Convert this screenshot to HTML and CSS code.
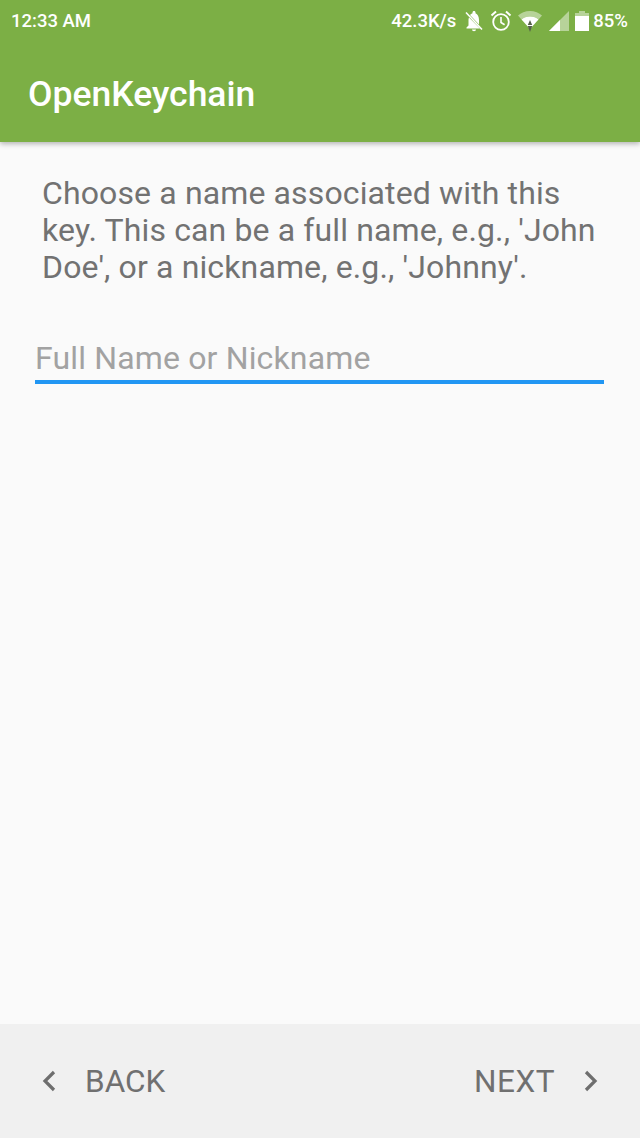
FILE: index.html
```html
<!DOCTYPE html>
<html lang="en">
<head>
<meta charset="utf-8">
<title>OpenKeychain</title>
<link rel="stylesheet" href="styles.css">
</head>
<body>
<div class="app">
  <header class="appbar">
    <div class="status">
      <span class="time">12:33 AM</span>
      <div class="status-right">
        <span class="speed">42.3K/s</span>
        <svg class="ic-bell" width="20" height="22" viewBox="0 0 20 22"><path fill="#fff" d="M10 1c-1 0-1.500.7-1.500 1.500v.8c-1 .3-1.900.9-2.500 1.700l9 9.500V10c0-3-1.300-5.700-3.500-6.700v-.8C11.500 1.700 11 1 10 1zM5 7.500C4.700 8.300 4.500 9.100 4.500 10v5.500L2.500 17.500v1h13.500L5 7.500zM8 19.500c0 1 .9 1.700 2 1.700s2-.7 2-1.700z"/><path stroke="#fff" stroke-width="1.600" d="M2 2.500l16 17"/></svg>
        <svg class="ic-alarm" width="22" height="22" viewBox="0 0 22 22"><circle cx="11" cy="12" r="7.800" fill="none" stroke="#fff" stroke-width="1.800"/><path fill="none" stroke="#fff" stroke-width="1.600" d="M11 7V12.500l3.600 2.200"/><path fill="none" stroke="#fff" stroke-width="2" d="M1.500 5.500l4.500-4M20.500 5.500l-4.500-4"/></svg>
        <svg class="ic-wifi" width="26" height="24" viewBox="0 0 26 24"><path fill="#fff" fill-opacity=".45" d="M1 6.500C4 3.800 8.200 2 13 2s9 1.800 12 4.500l-3.500 4C19.500 8.500 16.500 7.500 13 7.500s-6.500 1-8.500 3z"/><path fill="#fff" d="M4.500 10.500C6.500 8.500 9.500 7.500 13 7.500s6.500 1 8.500 3L13 20z"/><path fill="#55604a" d="M13 11l2.200 5h-4.400zM10.800 17h4.400L13 23z"/></svg>
        <svg class="ic-signal" width="20" height="20" viewBox="0 0 20 20"><path fill="#fff" fill-opacity=".45" d="M20 0v20H0z"/><path fill="#fff" d="M11 9v11H0z"/></svg>
        <svg class="ic-battery" width="14" height="22" viewBox="0 0 14 22"><path fill="#fff" fill-opacity=".45" d="M4 1h6v2h4v4H0V3h4z"/><path fill="#fff" d="M0 6h14v15H0z"/></svg>
        <span class="pct">85%</span>
      </div>
    </div>
    <h1 class="title">OpenKeychain</h1>
  </header>
  <main class="content">
    <p class="intro">Choose a name associated with this key. This can be a full name, e.g., 'John Doe', or a nickname, e.g., 'Johnny'.</p>
    <div class="field">Full Name or Nickname</div>
  </main>
  <footer class="nav">
    <div class="nav-btn">
      <svg width="14" height="24" viewBox="0 0 14 24"><path fill="none" stroke="#6e6e6e" stroke-width="3.200" d="M12 3L3 12l9 9"/></svg>
      <span class="back-label">BACK</span>
    </div>
    <div class="nav-btn">
      <span class="next-label">NEXT</span>
      <svg width="14" height="24" viewBox="0 0 14 24"><path fill="none" stroke="#6e6e6e" stroke-width="3.200" d="M2 3l9 9-9 9"/></svg>
    </div>
  </footer>
</div>
</body>
</html>
```
FILE: styles.css
```css
* { box-sizing: border-box; }
html, body { margin: 0; padding: 0; }
body { font-family: Roboto, "Liberation Sans", sans-serif; background: #fafafa; }
.app { width: 640px; height: 1138px; display: flex; flex-direction: column; overflow: hidden; }
.appbar { height: 142px; background: #7caf45; color: #fff; box-shadow: 0 2px 5px rgba(0,0,0,.28); position: relative; z-index: 1; flex: none; }
.status { height: 42px; padding: 0 12px 0 11px; display: flex; align-items: center; justify-content: space-between; font-weight: 500; font-size: 18.5px; }
.status-right { display: flex; align-items: center; }
.speed { margin-right: 8px; }
.ic-bell { margin-right: 6px; }
.ic-alarm { margin-right: 5px; }
.ic-wifi { margin-right: 6px; }
.ic-signal { margin-right: 6px; }
.ic-battery { margin-right: 4px; }
.title { margin: 0; padding: 30px 0 0 28px; font-size: 35.5px; line-height: 44px; font-weight: 500; }
.content { flex: 1; padding: 33px 35px 0; }
.intro { margin: 0 0 0 7px; color: #727272; font-size: 32px; line-height: 37px; letter-spacing: .13px; width: 560px; }
.field { margin-top: 54px; width: 569px; height: 44px; border-bottom: 4px solid #2196f3; color: #a2a2a2; font-size: 32px; line-height: 37px; letter-spacing: .15px; }
.nav { height: 114px; flex: none; background: #f0f0f0; display: flex; align-items: center; justify-content: space-between; padding: 0 42px; }
.nav-btn { display: flex; align-items: center; color: #707070; font-size: 31.5px; }
.back-label { margin-left: 29px; }
.next-label { margin-right: 29px; letter-spacing: .5px; }
```
